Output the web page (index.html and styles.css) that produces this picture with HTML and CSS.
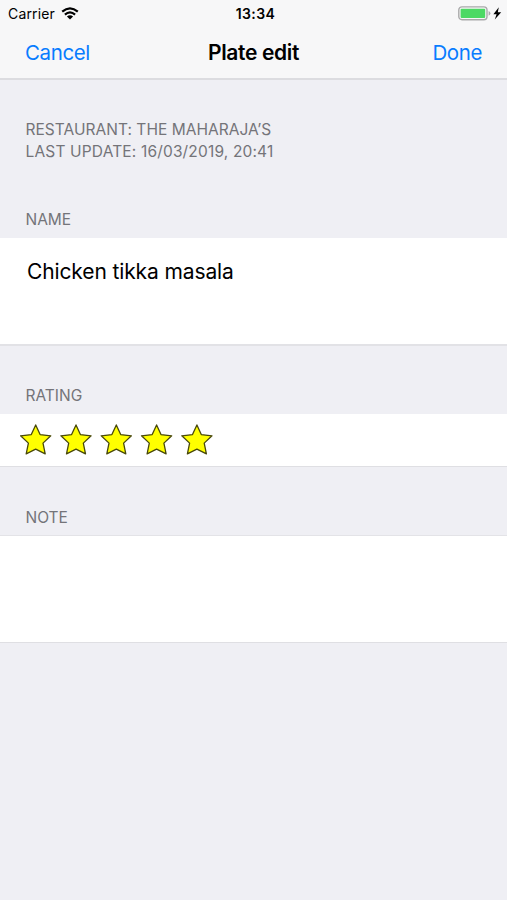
FILE: index.html
```html
<!DOCTYPE html>
<html lang="en">
<head>
<meta charset="utf-8">
<title>Plate edit</title>
<link rel="stylesheet" href="styles.css">
</head>
<body>
<header class="top">
  <div class="status">
    <div class="status-left">
      <span class="carrier">Carrier</span>
      <svg class="wifi" width="18" height="13" viewBox="0 0 18 13">
        <g fill="none" stroke="#000" stroke-width="2.2">
          <path d="M1.2 4.6Q9-2 16.8 4.6"/>
          <path d="M3.9 7.6Q9 3.2 14.1 7.6"/>
        </g>
        <path d="M5.9 9.4Q9 6.9 12.1 9.4L9 12.5Z"/>
      </svg>
    </div>
    <span class="time">13:34</span>
    <div class="status-right">
      <svg width="44" height="16" viewBox="0 0 44 16">
        <rect x=".8" y=".9" width="28.2" height="12.9" rx="3.2" fill="#f7f7f7" stroke="#a9a9aa" stroke-width="1.4"/>
        <rect x="2.6" y="2.7" width="24.6" height="9.3" rx="1" fill="#4cd964"/>
        <path d="M30.6 5Q32.4 5.7 32.4 7.3T30.6 9.7Z" fill="#a9a9aa"/>
        <path d="M40.8 1.3L35.4 8.2H38.6L36.8 13.5L43.2 6.2H39.8Z"/>
      </svg>
    </div>
  </div>
  <nav class="nav">
    <a class="action cancel">Cancel</a>
    <h1 class="title">Plate edit</h1>
    <a class="action done">Done</a>
  </nav>
</header>
<main>
  <div class="label info"><span class="restaurant">RESTAURANT: THE MAHARAJA’S</span><br><span class="updated">LAST UPDATE: 16/03/2019, 20:41</span></div>
  <h2 class="label name-label">NAME</h2>
  <div class="field name-field"><span class="name-text">Chicken tikka masala</span></div>
  <h2 class="label rating-label">RATING</h2>
  <div class="field stars">
    <svg width="194" height="32" viewBox="0 0 194 32">
      <defs><path id="star" d="M15.4 .9L19.8 10.6L30.5 11.8L22.7 19.1L24.9 29.9L15.4 25.2L5.9 29.9L8.1 19.1L.3 11.8L11 10.6Z" fill="#ff0" stroke="#48480c" stroke-width="1.3" stroke-linejoin="round"/></defs>
      <use href="#star" x=".3"/>
      <use href="#star" x="40.6"/>
      <use href="#star" x="80.9"/>
      <use href="#star" x="121.2"/>
      <use href="#star" x="161.5"/>
    </svg>
  </div>
  <h2 class="label note-label">NOTE</h2>
  <div class="field note-field"></div>
</main>
</body>
</html>
```
FILE: styles.css
```css
* { box-sizing: border-box; }
body {
  margin: 0;
  height: 900px;
  overflow: hidden;
  background: #efeff4;
  color: #000;
  font-family: Inter, "Liberation Sans", sans-serif;
}
.top {
  height: 80px;
  background: #f7f7f8;
  border-bottom: 2px solid #dcdce0;
}
.status {
  display: grid;
  grid-template-columns: 1fr auto 1fr;
  height: 27px;
  padding: 0 5px 0 8px;
  font-size: 14px;
  line-height: 28px;
}
.status-left { display: flex; gap: 6px; }
.carrier { letter-spacing: .15px; }
.wifi { margin-top: 7px; }
.time { padding-left: 1px; font-weight: 600; letter-spacing: .4px; }
.status-right { display: flex; justify-content: flex-end; padding-top: 6px; }
.nav {
  display: grid;
  grid-template-columns: 1fr auto 1fr;
  padding: 0 25px;
  font-size: 20.5px;
  line-height: 51px;
}
.action { color: #087cff; }
.cancel { letter-spacing: -.4px; }
.done { text-align: right; letter-spacing: -.4px; }
.title { margin: 0; font-size: 21px; font-weight: 600; letter-spacing: -.35px; }
.label {
  margin: 0;
  padding-left: 25.5px;
  color: #747479;
  font-size: 15.5px;
  font-weight: 400;
  line-height: 22px;
  white-space: nowrap;
}
.info { height: 129px; padding-top: 39px; }
.restaurant { letter-spacing: .03px; }
.updated { letter-spacing: .16px; }
.name-label { height: 29px; }
.rating-label { height: 69px; padding-top: 40px; }
.note-label { height: 68px; padding-top: 40px; }
.field { background: #fff; border-bottom: 1px solid #dfdfe3; }
.name-field { height: 108px; padding: 18px 27px; border-bottom-width: 2px; border-bottom-color: #e2e2e6; font-size: 21px; letter-spacing: -.12px; line-height: 32px; }
.name-field + .rating-label { height: 68px; padding-top: 39px; }
.stars { height: 53px; padding: 10px 20px; }
.stars svg { display: block; }
.note-field { height: 108px; border-top: 1px solid #e3e3e7; }
```
